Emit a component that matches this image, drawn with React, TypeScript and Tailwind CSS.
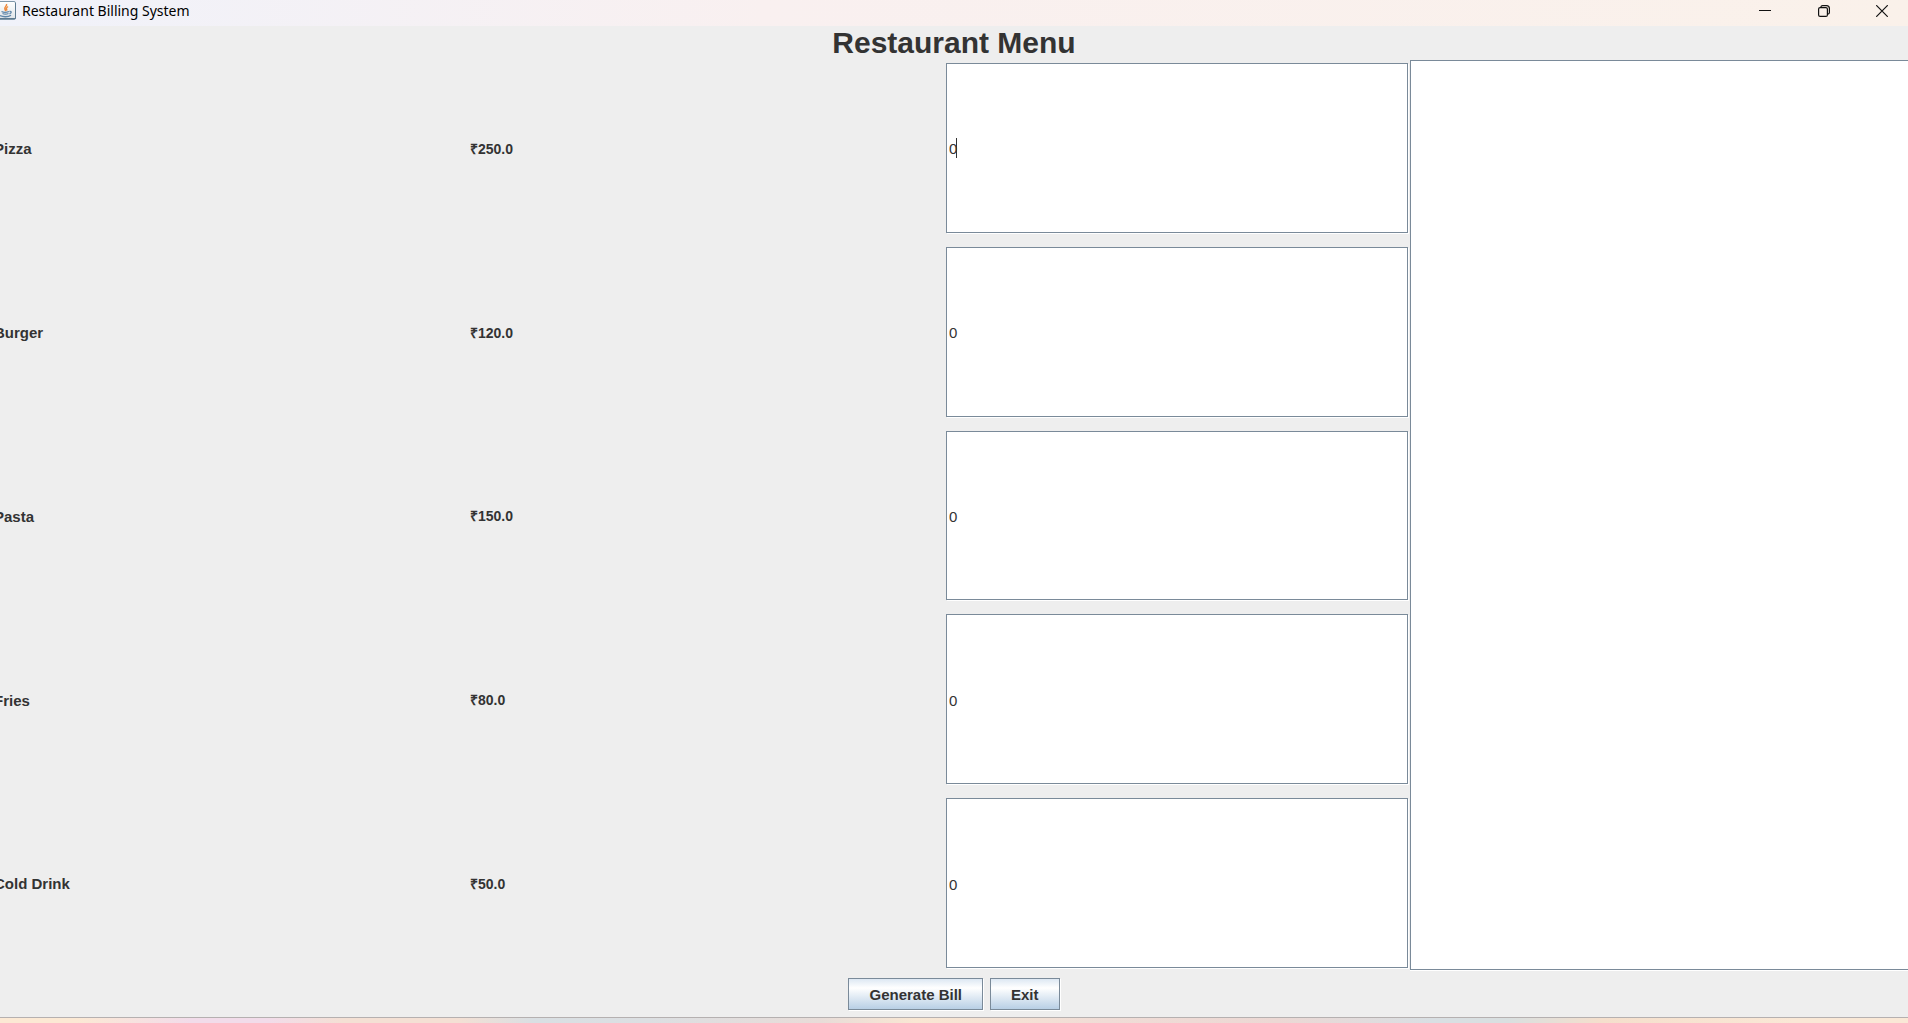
import { useState } from "react";

type Item = { id: string; name: string; price: string };

const items: Item[] = [
  { id: "pizza", name: "Pizza", price: "₹250.0" },
  { id: "burger", name: "Burger", price: "₹120.0" },
  { id: "pasta", name: "Pasta", price: "₹150.0" },
  { id: "fries", name: "Fries", price: "₹80.0" },
  { id: "cold-drink", name: "Cold Drink", price: "₹50.0" },
];

function JavaIcon() {
  return (
    <svg width="18" height="20" viewBox="0 0 18 20" aria-hidden="true" className="shrink-0">
      <defs>
        <linearGradient id="tile" x1="0" y1="0" x2="0" y2="1">
          <stop offset="0" stopColor="#ffffff" />
          <stop offset="1" stopColor="#dde3e8" />
        </linearGradient>
      </defs>
      <rect x="-2.5" y="1.5" width="18" height="18" rx="1.5" fill="url(#tile)" stroke="#7f97a9" />
      <path d="M15.5 3v15.5H0" fill="none" stroke="#5d7a90" />
      <path d="M6.500 4c1 2-3 3-1.500 5.500L6 11M8 6.500C6 8 6 8.500 7 10.500" fill="none" stroke="#ee8a3c" strokeWidth="1.500" />
      <path d="M1.500 11.500c2 1 5 1 7.500 0M2.500 13.500c2 .8 4 .8 6 0M9.500 11.500c2.500-.5 2 1.500 0 2.500" fill="none" stroke="#5f86a8" strokeWidth="1.300" />
      <path d="M0 15.500c3 1.700 8 1.700 11-.3" fill="none" stroke="#5f86a8" strokeWidth="1.300" />
    </svg>
  );
}

function TitleBar() {
  return (
    <header className="flex h-[26px] shrink-0 items-start justify-between bg-linear-to-r from-[#f0f2fa] via-[#f9f0f0] via-40% to-[#faf1ea]">
      <div className="flex items-start gap-1">
        <JavaIcon />
        <span className="font-['Noto_Sans',sans-serif] text-[14px] leading-[22px] text-black">
          Restaurant Billing System
        </span>
      </div>
      <div className="flex gap-[3px]">
        <button type="button" aria-label="Minimize" className="flex h-[22px] w-14 items-center justify-center">
          <svg width="12" height="12" viewBox="0 0 12 12" fill="none" stroke="#111">
            <path d="M0 5.500h12" />
          </svg>
        </button>
        <button type="button" aria-label="Restore" className="flex h-[22px] w-14 items-center justify-center">
          <svg width="12" height="12" viewBox="0 0 12 12" fill="none" stroke="#111" strokeWidth="1.200">
            <rect x="0.600" y="2.600" width="8.800" height="8.800" rx="1.500" />
            <path d="M2.800 2.200C3 1.200 3.600.6 4.600.6H8.500c1.700 0 2.900 1.200 2.900 2.900v3.900c0 1-.6 1.600-1.600 1.800" />
          </svg>
        </button>
        <button type="button" aria-label="Close" className="flex h-[22px] w-[53px] items-center justify-center">
          <svg width="12" height="12" viewBox="0 0 12 12" fill="none" stroke="#111" strokeWidth="1.200">
            <path d="M.2.2l11.600 11.600M11.800.2L.2 11.800" />
          </svg>
        </button>
      </div>
    </header>
  );
}

function MenuRow({ item, active }: { item: Item; active: boolean }) {
  const [quantity, setQuantity] = useState("0");
  return (
    <div className="grid flex-1 grid-cols-3 items-center gap-[14px] font-bold">
      <label htmlFor={item.id} className="pt-[3px] text-[15px]">
        {item.name}
      </label>
      <span className="pt-[3px] text-[14px]">{item.price}</span>
      <div className="relative h-full">
        <input
          id={item.id}
          type="text"
          value={quantity}
          onChange={(e) => setQuantity(e.target.value)}
          className="h-full w-full border border-[#7a8a99] bg-white px-[2px] pt-[2px] text-[15px] font-normal shadow-[1px_1px_0_#ffffff] outline-none"
        />
        {active && (
          <span className="absolute top-1/2 left-[10px] h-5 w-px -translate-y-1/2 bg-[#333333]" />
        )}
      </div>
    </div>
  );
}

function MetalButton({ children }: { children: string }) {
  return (
    <button
      type="button"
      className="h-8 border border-[#7a8a99] bg-linear-to-b from-[#dde8f3] via-white via-30% to-[#b8cfe5] px-5 pt-[3px] text-[15px] font-bold shadow-[1px_1px_0_#ffffff]"
    >
      {children}
    </button>
  );
}

export default function App() {
  return (
    <div className="flex min-h-screen flex-col overflow-hidden bg-[#eeeeee] font-['Liberation_Sans',Arial,sans-serif] text-[#333333]">
      <TitleBar />
      <h1 className="h-[34px] text-center text-[30px] leading-[34px] font-bold">Restaurant Menu</h1>
      <main className="flex flex-1 gap-[2px]">
        <section className="-ml-[6px] flex flex-1 flex-col gap-[14px] pt-[3px] pb-[2px]">
          {items.map((item, i) => (
            <MenuRow key={item.id} item={item} active={i === 0} />
          ))}
        </section>
        <textarea
          aria-label="Bill"
          readOnly
          className="w-[498px] resize-none border-y border-l border-[#7a8a99] bg-white shadow-[0_1px_0_#ffffff] outline-none"
        />
      </main>
      <footer className="flex h-[47px] items-center justify-center gap-[7px]">
        <MetalButton>Generate Bill</MetalButton>
        <MetalButton>Exit</MetalButton>
      </footer>
      <div className="h-[6px] border-t border-[#b5b0b0] bg-[linear-gradient(to_right,#fce9d4_4%,#f2dcea_10%,#f2dcea_14%,#f4e0d4_18%,#f4e0d4_24%,#d9dfe3_28%,#dcdfe2_34%,#e8dcd8_43%,#f9e7d3_48%,#f0dcd6_58%,#ecd8d4_67%,#d9dfe3_75%,#d9dfe0_79%,#f5dfcc_84%,#fae8d6_94%)]" />
    </div>
  );
}
